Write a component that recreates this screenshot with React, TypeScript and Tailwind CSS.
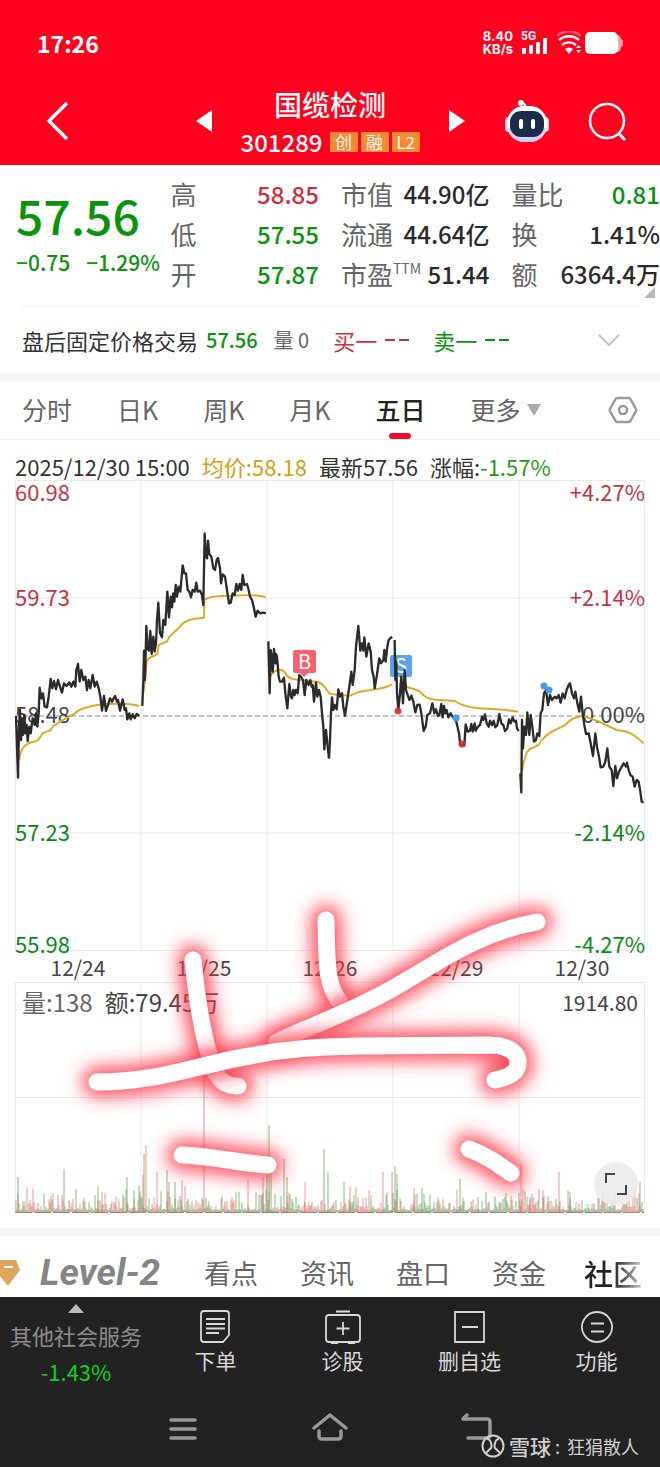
import { clsx } from 'clsx';

type Tone = 'up' | 'down' | 'plain';

const TONES: Record<Tone, string> = {
  up: 'text-[#cc2f3c]',
  down: 'text-[#0a930c]',
  plain: 'text-[#2b2b2b]',
};

const QUOTE_COLUMNS: { label: string; sup?: string; value: string; tone: Tone }[][] = [
  [
    { label: '高', value: '58.85', tone: 'up' },
    { label: '低', value: '57.55', tone: 'down' },
    { label: '开', value: '57.87', tone: 'down' },
  ],
  [
    { label: '市值', value: '44.90亿', tone: 'plain' },
    { label: '流通', value: '44.64亿', tone: 'plain' },
    { label: '市盈', sup: 'TTM', value: '51.44', tone: 'plain' },
  ],
  [
    { label: '量比', value: '0.81', tone: 'down' },
    { label: '换', value: '1.41%', tone: 'plain' },
    { label: '额', value: '6364.4万', tone: 'plain' },
  ],
];

const PERIODS = ['分时', '日K', '周K', '月K', '五日'];
const DATES = ['12/24', '12/25', '12/26', '12/29', '12/30'];
const SECTIONS = ['看点', '资讯', '盘口', '资金'];

const AXIS = [
  { y: 21, price: '60.98', pct: '+4.27%', color: '#c8323e' },
  { y: 126, price: '59.73', pct: '+2.14%', color: '#c8323e' },
  { y: 243, price: '58.48', pct: '0.00%', color: '#444444' },
  { y: 361, price: '57.23', pct: '-2.14%', color: '#0a8a14' },
  { y: 473, price: '55.98', pct: '-4.27%', color: '#0a8a14' },
];

// Traces are in thirds of a pixel, one subpath per trading day
const PRICE_LEFT = `M48 708 L54 893 57 740 60 690 63 780 66 715 69 765 73 705 76 760 80 735 83 783 88 740 92 760 98 715 104 735 108 700 112 740 116 700 119 623 124 655 129 640 134 680 141 682 146 650 152 597 157 625 162 603 168 628 174 600 180 620 186 638 192 610 200 618 208 607 214 620 220 605 226 620 229 570 234 552 239 605 244 570 250 600 256 590 261 630 266 600 271 625 278 585 284 620 290 605 296 625 301 650 306 692 312 648 318 693 324 675 330 655 336 665 345 648 351 665 354 660 360 692 368 658 374 690 378 685 382 718 388 700 392 718 398 703 404 715 410 702 418 708
M427 678 L430 600 432 512 435 600 439 438 443 505 447 512 451 453 455 522 460 470 464 515 468 490 471 420 475 368 480 460 486 472 490 420 496 435 502 335 507 412 512 350 516 382 520 340 523 365 527 315 531 350 536 320 541 335 548 256 553 280 558 280 563 330 568 335 573 352 578 330 584 335 589 308 593 335 600 332 606 345 610 375 614 160 617 225 621 235 624 182 628 222 634 230 640 265 645 270 650 240 654 234 660 265 663 310 668 283 675 290 681 330 687 370 692 368 698 340 704 345 709 312 714 332 719 312 724 330 728 285 733 315 741 312 746 330 750 350 756 360 762 385 767 410 773 392 780 400 790 398 798 400
M805 484 L809 640 812 510 815 530 818 575 822 507 826 550 828 522 831 530 836 590 840 605 846 605 852 593 856 640 862 685 868 612 873 650 876 655 880 630 884 645 888 630 893 640 898 585 904 592 909 600 914 645 919 600 926 615 931 600 935 620 938 615 942 665 948 608 952 650 957 630 962 650 966 700 970 740 973 808 978 750 982 790 987 835`;

const PRICE_RIGHT = `M-3 835 L0 780 3 700 6 652 10 690 14 675 20 688 25 628 30 650 36 640 40 680 45 707 52 660 58 620 64 575 68 615 74 570 78 500 85 438 91 512 96 490 100 512 103 472 109 530 116 490 122 515 126 570 131 590 134 625 140 590 145 555 148 535 153 550 160 540 163 510 167 545 172 500 176 480 186 470
M194 480 L196 600 199 545 201 640 205 690 210 640 214 590 219 670 224 570 228 630 233 645 238 660 244 647 250 665 256 697 262 675 269 674 274 700 281 753 287 740 292 705 300 700 307 670 313 700 318 688 324 708 328 705 334 672 338 712 342 678 346 700 350 690 355 712 362 700 368 710 376 715 382 738 387 760 391 795 403 797 407 733 413 755 420 752 424 732 428 755 434 730 437 752 444 740 450 735 456 710 460 720 465 703 470 730 476 740 480 722 486 735 491 722 496 742 502 735 508 702 514 730 520 735 525 753 532 745 537 718 542 730 548 712 553 725 558 722 561 745 566 753
M571 880 L574 937 576 720 579 805 583 740 588 765 592 697 598 765 602 705 607 740 612 785 618 780 622 760 628 768 632 700 637 690 642 640 648 630 654 675 660 645 666 660 674 650 680 655 686 645 692 668 698 640 704 655 710 630 716 615 720 610 726 640 732 655 736 635 742 670 748 695 753 650 758 700 763 735 768 762 776 760 782 790 789 828 796 760 801 800 807 830 812 862 820 860 826 845 832 805 838 860 845 870 850 918 856 858 861 895 867 875 874 862 881 850 888 860 891 848 896 870 901 885 908 890 914 920 920 900 926 905 931 935 935 965 941 967`;

const AVERAGE_LEFT = `M58 840 C60 805 75 795 85 790 L112 782 C122 775 122 762 132 758 L150 752 160 738 185 722 225 700 C240 682 265 683 290 675 C330 670 390 670 417 678
M430 640 L440 545 C450 525 465 530 472 522 L476 495 500 485 508 470 540 440 C555 418 580 417 612 413 L613 360 C630 345 680 347 700 347 C730 345 770 342 797 352
M810 590 C825 565 845 565 855 578 C865 600 885 598 900 600 L950 605 C970 608 975 625 990 642`;

const AVERAGE_RIGHT = `M0 642 L60 647 90 635 135 628 C160 625 170 622 186 613
M208 610 C230 625 255 625 270 635 C285 655 300 658 330 660 L375 663 C400 680 430 684 450 685 C490 688 530 688 564 695
M576 872 C580 855 578 850 585 835 C595 800 600 810 625 795 C650 755 670 755 705 735 C730 710 745 708 765 710 L800 722 860 750 890 755 C915 765 930 780 941 790`;

// Tall volume bars: x, height, rising
const SPIKES: [number, number, boolean][] = [
  [18, 35, false], [64, 43, false], [76, 23, false], [98, 26, false], [102, 20, true],
  [127, 35, false], [134, 22, false], [139, 26, false], [143, 37, true], [144, 59, false],
  [146, 67, true], [157, 40, true], [167, 42, false], [169, 30, true], [175, 30, false],
  [182, 32, true], [185, 25, true], [204, 150, true], [248, 33, true], [263, 35, true],
  [267, 45, false], [269, 87, false], [271, 50, false], [284, 53, false], [287, 35, false],
  [305, 30, true], [324, 63, false], [328, 40, false], [344, 30, false], [350, 26, true],
  [356, 25, true], [383, 40, true], [392, 40, true], [395, 46, false], [397, 38, false],
  [414, 24, true], [422, 24, false], [457, 22, true], [460, 33, false], [478, 15, false],
  [521, 48, true], [530, 15, false], [543, 22, true], [559, 40, true], [568, 22, true],
  [570, 20, false], [640, 30, false],
];

function buildVolume() {
  let seed = 17;
  const next = () => {
    seed = (seed * 1103515245 + 12345) % 2147483648;
    return seed / 2147483648;
  };
  const paths = { up: '', down: '' };
  for (let x = 16; x < 644; x += 1) {
    const day = ((x - 16) % 126) / 126;
    // heavier at the open and the close
    const weight = 0.5 + 1.1 * Math.abs(day - 0.5);
    const height = 2 + Math.pow(next(), 3) * 24 * weight;
    paths[next() > 0.5 ? 'up' : 'down'] += `M${x} 230v-${height.toFixed(1)}`;
  }
  SPIKES.forEach(([x, height, rising]) => {
    paths[rising ? 'up' : 'down'] += `M${x} 230v-${height}`;
  });
  return paths;
}

const VOLUME = buildVolume();

const STROKES = [
  'M193 480 C197 520 203 560 213 586 C218 602 228 606 238 606',
  'M326 440 C327 485 326 505 340 522',
  'M277 562 C300 550 345 535 390 510 C435 485 475 453 537 442',
  'M97 602 C160 602 200 584 250 576 C290 568 320 567 360 566 L490 565 C518 566 521 580 516 590 C512 596 500 599 495 600',
  'M182 675 C210 676 240 683 268 685',
  'M469 669 C485 675 495 682 511 693',
];

function StatusBar() {
  return (
    <div className="flex h-[86px] items-center justify-between pr-[37px] pl-[37px]">
      <span className="text-[23px] leading-7 font-bold">17:26</span>
      <div className="flex items-center gap-2">
        <span className="text-center font-[Inter] text-[13px] leading-[13px] font-bold">8.40<br />KB/s</span>
        <svg className="h-6 w-7" viewBox="0 0 28 24" fill="#fff">
          <text x="0" y="9" fontSize="12" fontWeight="700" fontFamily="Roboto, sans-serif">5G</text>
          <rect x="1" y="17" width="4" height="6" rx="1" />
          <rect x="8" y="14" width="4" height="9" rx="1" />
          <rect x="15" y="11" width="4" height="12" rx="1" />
          <rect x="22" y="7" width="4" height="16" rx="1" />
        </svg>
        <svg className="h-6 w-6" viewBox="0 0 24 24" fill="none" stroke="#fff" strokeWidth="2.4">
          <path d="M0 5C7-1 17-1 24 5" opacity=".35" />
          <path d="M2 9c6-5 14-5 20 0M5 14c4-3.500 10-3.500 14 0" />
          <path d="M8 18c2.500-2 5.500-2 8 0l-4 5z" fill="#fff" stroke="none" />
          <path d="M19 17l2.500-3 2.500 3zM19 19l2.500 3 2.500-3z" fill="#fff" stroke="none" />
        </svg>
        <svg className="-ml-1 h-6 w-[38px]" viewBox="0 0 38 24">
          <path d="M30 4h3q3 1 3 4 2 0 2 4t-2 4q0 4-3 5h-3z" fill="#ffa0a8" />
          <rect x="0" y="1" width="33" height="22" rx="5" fill="#fff" />
        </svg>
      </div>
    </div>
  );
}

function Header() {
  return (
    <header className="bg-[#ff001e] text-white">
      <StatusBar />
      <div className="grid h-[79px] grid-cols-[1fr_180px_1fr]">
        <div className="flex items-center justify-between pr-7 pb-[10px] pl-[46px]">
          <button type="button" aria-label="返回">
            <svg className="h-10 w-6" viewBox="0 0 24 40" fill="none" stroke="#fff" strokeWidth="3.500">
              <path d="M21 2L3 20l18 18" />
            </svg>
          </button>
          <button type="button" aria-label="上一只">
            <svg className="h-[22px] w-4" viewBox="0 0 16 22" fill="#fff"><path d="M16 0v22L0 11z" /></svg>
          </button>
        </div>
        <div className="flex flex-col items-center whitespace-nowrap">
          <h1 className="text-[28px] leading-9 font-medium">国缆检测</h1>
          <div className="flex items-center gap-[3px]">
            <span className="mr-1 text-[24px] leading-10 font-medium">301289</span>
            {['创', '融', 'L2'].map((tag) => (
              <span key={tag} className="flex h-5 min-w-7 items-center justify-center bg-[#f58a33] px-1 text-[17px] leading-5">
                {tag}
              </span>
            ))}
          </div>
        </div>
        <div className="flex items-center justify-between pr-8 pb-[10px] pl-[29px]">
          <button type="button" aria-label="下一只">
            <svg className="h-[22px] w-4" viewBox="0 0 16 22" fill="#fff"><path d="M0 0v22l16-11z" /></svg>
          </button>
          <button type="button" aria-label="智能助手">
            <svg className="h-11 w-[46px]" viewBox="0 0 46 44">
              <path d="M16 4q5-1 6 5" fill="none" stroke="#fff" strokeWidth="2" />
              <circle cx="17" cy="4" r="3" fill="#fff" />
              <rect x="1" y="18" width="8" height="15" rx="4" fill="#dcd2f7" />
              <rect x="37" y="18" width="8" height="15" rx="4" fill="#dcd2f7" />
              <rect x="3" y="7" width="40" height="36" rx="17" fill="#fff" />
              <path d="M4 29q3 14 19 14t19-14z" fill="#d9cdfa" />
              <rect x="6" y="12" width="34" height="26" rx="11" fill="#1c2b4a" />
              <rect x="15" y="20" width="4" height="10" rx="2" fill="#fff" />
              <rect x="27" y="20" width="4" height="10" rx="2" fill="#fff" />
            </svg>
          </button>
          <button type="button" aria-label="搜索">
            <svg className="h-10 w-10" viewBox="0 0 40 40" fill="none" stroke="#fff" strokeWidth="2.500">
              <circle cx="19" cy="20" r="17" />
              <path d="M30 32l7 7" strokeWidth="3" />
            </svg>
          </button>
        </div>
      </div>
    </header>
  );
}

function Quote() {
  return (
    <section className="relative grid grid-cols-[132fr_148fr_148fr_148fr] gap-x-[22px] pt-[9px] pb-3 pl-4 font-medium whitespace-nowrap">
      <div className="min-w-0 text-[#0a930c]">
        <p className="pt-2 text-[48px] leading-[64px]">57.56</p>
        <p className="flex gap-4 text-[21px] leading-8">
          <span>−0.75</span>
          <span>−1.29%</span>
        </p>
      </div>
      {QUOTE_COLUMNS.map((column) => (
        <dl key={column[0].label} className="min-w-0">
          {column.map(({ label, sup, value, tone }) => (
            <div key={label} className="flex justify-between leading-10">
              <dt className="flex text-[26px] font-normal text-[#666]">
                {label}
                {sup && <span className="text-[14px] leading-7">{sup}</span>}
              </dt>
              <dd className={clsx('text-[24px]', TONES[tone])}>{value}</dd>
            </div>
          ))}
        </dl>
      ))}
      <svg className="absolute right-[5px] bottom-2 size-[11px]" viewBox="0 0 11 11"><path d="M11 0v11H0z" fill="#bbb" /></svg>
    </section>
  );
}

function AfterHours() {
  return (
    <section className="mx-[22px] flex h-[67px] items-center border-t border-[#eee] text-[22px] leading-8 whitespace-nowrap text-[#333]">
      <span>盘后固定价格交易</span>
      <span className="ml-2 text-[20px] font-medium text-[#0a930c]">57.56</span>
      <span className="ml-4 text-[20px] text-[#666]">量 0</span>
      <span className="ml-6 text-[#cc2f3c]">买一</span>
      <span className="ml-2 flex gap-1 text-[#cc2f3c]"><i className="h-[2px] w-[10px] bg-current" /><i className="h-[2px] w-[10px] bg-current" /></span>
      <span className="ml-6 text-[#0a930c]">卖一</span>
      <span className="ml-2 flex gap-1 text-[#0a930c]"><i className="h-[2px] w-[10px] bg-current" /><i className="h-[2px] w-[10px] bg-current" /></span>
      <button type="button" aria-label="展开" className="mr-[18px] ml-auto">
        <svg className="h-3 w-[22px]" viewBox="0 0 22 12" fill="none" stroke="#c4c4c4" strokeWidth="2"><path d="M1 1l10 10L21 1" /></svg>
      </button>
    </section>
  );
}

function PeriodTabs() {
  return (
    <nav className="flex h-[59px] items-stretch gap-[45px] border-b border-[#eee] px-[22px] text-[25px] whitespace-nowrap text-[#666]">
      {PERIODS.map((period) => (
        <button key={period} type="button" className={clsx('relative', period === '五日' && 'font-medium text-[#222]')}>
          {period}
          {period === '五日' && <span className="absolute bottom-0 left-1/2 h-[6px] w-[22px] -translate-x-1/2 rounded-full bg-[#e8112a]" />}
        </button>
      ))}
      <button type="button" className="flex items-center gap-[6px]">
        更多
        <svg className="h-3 w-[14px]" viewBox="0 0 14 12" fill="#aaa"><path d="M0 0h14L7 12z" /></svg>
      </button>
      <button type="button" aria-label="设置" className="ml-auto">
        <svg className="h-7 w-[30px]" viewBox="0 0 30 28" fill="none" stroke="#999" strokeWidth="2.500">
          <path d="M9 2h12q1 0 2 2l5 9q.5 1 0 2l-5 9q-1 2-2 2H9q-1 0-2-2l-5-9q-.5-1 0-2l5-9q1-2 2-2z" />
          <circle cx="15" cy="14" r="4" />
        </svg>
      </button>
    </nav>
  );
}

function PriceChart() {
  return (
    <svg className="block w-full overflow-visible" viewBox="0 0 660 472" fontSize="22">
      <g stroke="#e9e9e9" fill="none">
        <path d="M15.500 .5h629v470h-629zM141 0v470M267 0v470M393 0v470M519 0v470M15 118h629M15 353h629" />
      </g>
      <path d="M15 236h629" stroke="#888" strokeDasharray="5 3" />
      {AXIS.map(({ y, price, pct, color }) => (
        <g key={price} fill={color}>
          <text x="15" y={y}>{price}</text>
          <text x="645" y={y} textAnchor="end">{pct}</text>
        </g>
      ))}
      <path d="M295 170h19q2 0 2 2v19q0 2-2 2h-6l-4 4-4-4h-5q-2 0-2-2v-19q0-2 2-2z" fill="#f4606f" />
      <text x="304.500" y="189" textAnchor="middle" fontSize="20" fill="#fff">B</text>
      <rect x="390" y="175" width="22" height="22" rx="2" fill="#5ba3f0" />
      <text x="401" y="193" textAnchor="middle" fontSize="20" fill="#fff">S</text>
      <g fill="none" strokeLinejoin="round" transform="scale(.33333)">
        <g stroke="#e0a82a" strokeWidth="6">
          <path d={AVERAGE_LEFT} />
          <path d={AVERAGE_RIGHT} transform="translate(990 0)" />
        </g>
        <g stroke="#2b2b2b" strokeWidth="7">
          <path d={PRICE_LEFT} />
          <path d={PRICE_RIGHT} transform="translate(990 0)" />
        </g>
      </g>
      <g fill="#d3303f" fillOpacity=".9">
        <circle cx="398" cy="231" r="3.500" />
        <circle cx="462" cy="264" r="3.500" />
      </g>
      <g fill="#4a9aec">
        <circle cx="456" cy="238" r="3.500" />
        <circle cx="544" cy="206" r="3.500" />
        <circle cx="549" cy="210" r="3.500" />
      </g>
    </svg>
  );
}

function VolumeChart() {
  return (
    <div className="relative">
      <svg className="block w-full" viewBox="0 0 660 231">
        <path d="M15.500 .5h629v230h-629zM141 0v230M267 0v230M393 0v230M519 0v230M15 115.500h629" fill="none" stroke="#e9e9e9" />
        <path d={VOLUME.down} stroke="#5fa05b" strokeOpacity=".75" />
        <path d={VOLUME.up} stroke="#d8605c" strokeOpacity=".65" />
        <path d="M15 230.500h629" stroke="#8d8a70" strokeDasharray="17 2" />
      </svg>
      <div className="absolute inset-x-0 top-[2px] flex px-[22px] text-[24px] leading-9 text-[#444]">
        <span className="text-[#666]">量:138</span>
        <span className="ml-3">额:79.45万</span>
        <span className="ml-auto text-[21px]">1914.80</span>
      </div>
    </div>
  );
}

// Freehand marks drawn over both charts
function Scribble() {
  return (
    <svg className="pointer-events-none absolute inset-x-0 top-0 w-full" viewBox="0 0 660 733" fill="none" strokeLinecap="round" strokeLinejoin="round">
      <defs>
        <filter id="glow" filterUnits="userSpaceOnUse" x="0" y="380" width="660" height="353">
          <feGaussianBlur stdDeviation="9" />
        </filter>
      </defs>
      {STROKES.map((d) => (
        <g key={d}>
          <path d={d} stroke="#fb3a4d" strokeOpacity=".9" strokeWidth="30" filter="url(#glow)" />
          <path d={d} stroke="#fff" strokeWidth="17" />
        </g>
      ))}
    </svg>
  );
}

function Charts() {
  return (
    <section className="pb-[15px]">
      <div className="flex h-10 items-center gap-3 px-[15px] pt-3 text-[22px] leading-7 whitespace-nowrap text-[#333]">
        <span>2025/12/30 15:00</span>
        <span className="text-[#d0a010]">均价:58.18</span>
        <span>最新57.56</span>
        <span>涨幅:<span className="text-[#2a9a20]">-1.57%</span></span>
      </div>
      <div className="relative">
        <PriceChart />
        <div className="grid h-[30px] grid-cols-5 px-[15px] text-center text-[21px] leading-[30px] text-[#444]">
          {DATES.map((date) => <span key={date}>{date}</span>)}
        </div>
        <VolumeChart />
        <Scribble />
        <button type="button" aria-label="全屏" className="absolute right-[22px] bottom-[7px] flex size-11 items-center justify-center rounded-full bg-[#ebebeb]/90">
          <svg className="size-6" viewBox="0 0 24 24" fill="none" stroke="#444" strokeWidth="2"><path d="M2 11V2h9M22 13v9h-9" /></svg>
        </button>
      </div>
    </section>
  );
}

function SectionTabs() {
  return (
    <nav className="flex h-[61px] items-center gap-[42px] overflow-hidden pt-3 text-[27px] leading-9 whitespace-nowrap text-[#666]">
      <button type="button" className="flex items-center">
        <svg className="mr-5 h-[26px] w-5" viewBox="0 0 20 26">
          <path d="M0 0h16l4 10L8 26 0 16z" fill="#dda75f" />
          <path d="M4 7h9" stroke="#fff" strokeWidth="2" />
        </svg>
        <span className="w-[122px] text-left font-[Roboto] text-[37px] font-bold text-[#858585] italic">Level-2</span>
      </button>
      {SECTIONS.map((section) => <button key={section} type="button">{section}</button>)}
      <button type="button" className="-ml-1 bg-linear-to-r from-[#222] from-50% to-[#ccc] bg-clip-text text-[29px] font-medium text-transparent">社区</button>
    </nav>
  );
}

const ACTIONS = [
  {
    label: '下单',
    icon: <path d="M4 1h22q3 0 3 3v21l-6 7H4q-3 0-3-3V4q0-3 3-3zM6 9h19M6 14h19M6 18.500h19M6 23h13" />,
  },
  {
    label: '诊股',
    icon: <path d="M2 5h28q3 0 3 3v21q0 3-3 3H2q-3 0-3-3V8q0-3 3-3zM9 1.500h14M16 12v13M9.500 18.500h13M4 33h7M21 33h7" />,
  },
  {
    label: '删自选',
    icon: <path d="M1 2h29v30H1zM8 17h16" />,
  },
  {
    label: '功能',
    icon: <path d="M16 2a15 15 0 1 0 .01 0zM10 13.500h13M10 21.500h13" />,
  },
];

function BottomBar() {
  return (
    <footer className="relative bg-[#222] pb-[21px] text-[#d8d8d8]">
      <div className="grid grid-cols-[152fr_127fr_127fr_127fr_127fr] text-[21px] whitespace-nowrap">
        <button type="button" className="flex flex-col items-center pt-[7px]">
          <svg className="h-[9px] w-4" viewBox="0 0 16 9" fill="#bbb"><path d="M8 0l8 9H0z" /></svg>
          <span className="mt-[6px] text-[22px] leading-8 text-[#8c8c8c]">其他社会服务</span>
          <span className="mt-1 text-[22px] leading-8 text-[#0fd01c]">-1.43%</span>
        </button>
        {ACTIONS.map(({ label, icon }) => (
          <button key={label} type="button" className="flex flex-col items-center pt-[13px]">
            <svg className="size-[34px] overflow-visible" viewBox="0 0 32 34" fill="none" stroke="#d8d8d8" strokeWidth="1.800">{icon}</svg>
            <span className="leading-8">{label}</span>
          </button>
        ))}
      </div>
      <div className="mx-[110px] mt-6 grid grid-cols-3 place-items-center">
        <button type="button" aria-label="最近任务">
          <svg className="size-9" viewBox="0 0 36 36" stroke="#999" strokeWidth="3.500" strokeLinecap="round"><path d="M6 9h24M6 18h24M6 27h24" /></svg>
        </button>
        <button type="button" aria-label="主屏幕">
          <svg className="size-9" viewBox="0 0 36 36" fill="none" stroke="#999" strokeWidth="3.500" strokeLinecap="round" strokeLinejoin="round"><path d="M2 17L18 4l16 13M7 20v5q0 3 3 3h16q3 0 3-3v-5" /></svg>
        </button>
        <button type="button" aria-label="后退">
          <svg className="size-9" viewBox="0 0 36 36" fill="none" stroke="#999" strokeWidth="3.500" strokeLinecap="round" strokeLinejoin="round"><path d="M8 4L4 8h24q3 0 3 3v13q0 3-3 3H9" /></svg>
        </button>
      </div>
      <div className="absolute right-[21px] bottom-[6px] flex items-center text-[18px] leading-8 text-[#d0d0d0]">
        <svg className="mr-1 size-6" viewBox="0 0 24 24" fill="none" stroke="#d0d0d0" strokeWidth="2">
          <circle cx="12" cy="12" r="10.500" />
          <path d="M6 5q3 0 4 4t0 5-5 5M18 5q-3 0-4 4t0 5 5 5" />
        </svg>
        <span className="text-[21px] font-medium">雪球</span>
        <span className="mx-1 w-1">:</span>
        <span className="ml-1">狂狷散人</span>
      </div>
    </footer>
  );
}

export default function App() {
  return (
    <div className="w-full overflow-hidden bg-white font-['Noto_Sans_CJK_SC',sans-serif]">
      <Header />
      <Quote />
      <AfterHours />
      <div className="h-2 bg-[#f6f6f6]" />
      <PeriodTabs />
      <Charts />
      <div className="h-2 bg-[#f6f6f6]" />
      <SectionTabs />
      <BottomBar />
    </div>
  );
}
